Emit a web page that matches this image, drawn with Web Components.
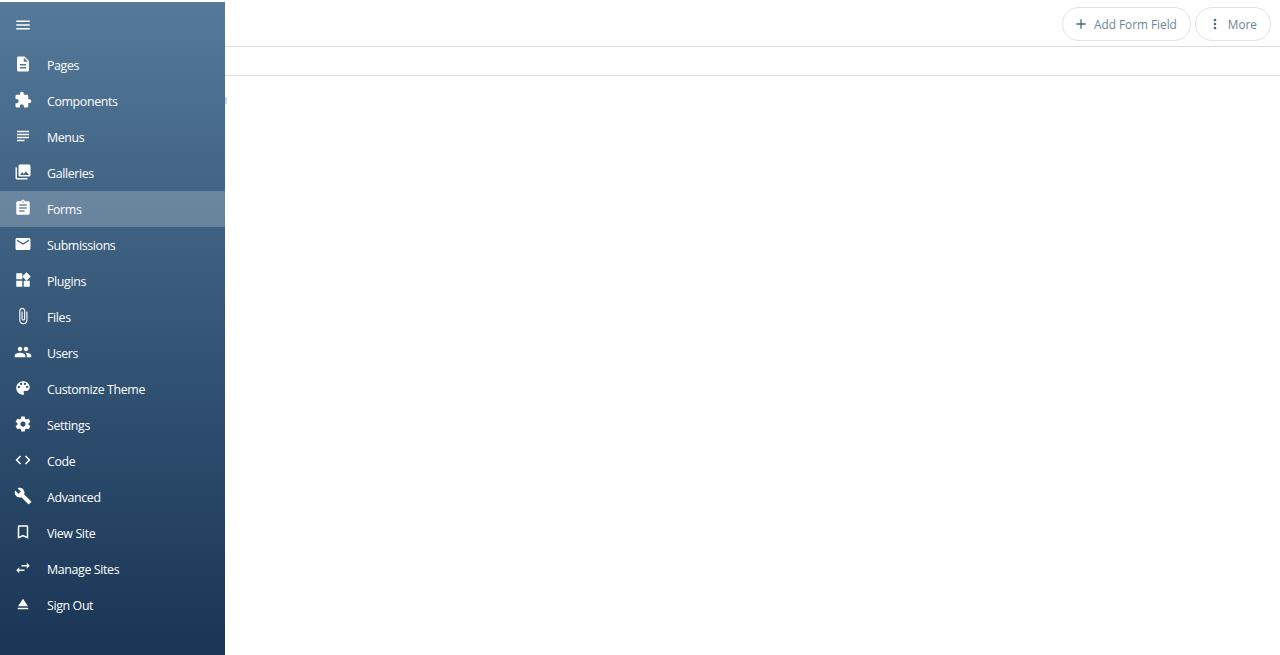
<!DOCTYPE html>
<html><head><meta charset="utf-8"><title>Forms</title>
<style>html,body{margin:0;height:100%;overflow:hidden;background:#fff;font-family:"Open Sans",sans-serif}</style>
</head><body>
<app-shell>
<side-nav slot="nav">
<nav-item icon="description">Pages</nav-item>
<nav-item icon="extension">Components</nav-item>
<nav-item icon="subject">Menus</nav-item>
<nav-item icon="collections">Galleries</nav-item>
<nav-item icon="assignment" active>Forms</nav-item>
<nav-item icon="email">Submissions</nav-item>
<nav-item icon="widgets">Plugins</nav-item>
<nav-item icon="attach">Files</nav-item>
<nav-item icon="people">Users</nav-item>
<nav-item icon="palette">Customize Theme</nav-item>
<nav-item icon="settings">Settings</nav-item>
<nav-item icon="code">Code</nav-item>
<nav-item icon="build">Advanced</nav-item>
<nav-item icon="bookmark">View Site</nav-item>
<nav-item icon="swap">Manage Sites</nav-item>
<nav-item icon="eject">Sign Out</nav-item>
</side-nav>
<top-bar slot="main">
<pill-button icon="add" style="padding-left:10px">Add Form Field</pill-button>
<pill-button icon="more">More</pill-button>
</top-bar>
</app-shell>
<script>
const P={
menu:"M3 18h18v-2H3v2zm0-5h18v-2H3v2zm0-7v2h18V6H3z",
description:"M14 2H6c-1.1 0-1.99.9-1.99 2L4 20c0 1.1.89 2 1.99 2H18c1.1 0 2-.9 2-2V8l-6-6zm2 16H8v-2h8v2zm0-4H8v-2h8v2zm-3-5V3.5L18.5 9H13z",
extension:"M20.5 11H19V7c0-1.1-.9-2-2-2h-4V3.5C13 2.12 11.88 1 10.5 1S8 2.12 8 3.5V5H4c-1.1 0-1.99.9-1.99 2v3.8H3.5c1.49 0 2.7 1.21 2.7 2.7s-1.21 2.7-2.7 2.7H2V20c0 1.1.9 2 2 2h3.8v-1.5c0-1.49 1.21-2.7 2.7-2.7 1.49 0 2.7 1.21 2.7 2.7V22H17c1.1 0 2-.9 2-2v-4h1.5c1.38 0 2.5-1.12 2.5-2.5S21.88 11 20.5 11z",
subject:"M14 17H4v2h10v-2zm6-8H4v2h16V9zM4 15h16v-2H4v2zM4 5v2h16V5H4z",
collections:"M22 16V4c0-1.1-.9-2-2-2H8c-1.1 0-2 .9-2 2v12c0 1.1.9 2 2 2h12c1.1 0 2-.9 2-2zm-11-4l2.03 2.71L16 11l4 5H8l3-4zM2 6v14c0 1.1.9 2 2 2h14v-2H4V6H2z",
assignment:"M19 3h-4.18C14.4 1.84 13.3 1 12 1c-1.3 0-2.4.84-2.82 2H5c-1.1 0-2 .9-2 2v14c0 1.1.9 2 2 2h14c1.1 0 2-.9 2-2V5c0-1.1-.9-2-2-2zm-7 0c.55 0 1 .45 1 1s-.45 1-1 1-1-.45-1-1 .45-1 1-1zm2 14H7v-2h7v2zm3-4H7v-2h10v2zm0-4H7V7h10v2z",
email:"M20 4H4c-1.1 0-1.99.9-1.99 2L2 18c0 1.1.9 2 2 2h16c1.1 0 2-.9 2-2V6c0-1.1-.9-2-2-2zm0 4l-8 5-8-5V6l8 5 8-5v2z",
widgets:"M13 13v8h8v-8h-8zM3 21h8v-8H3v8zM3 3v8h8V3H3zm13.66-1.31L11 7.34 16.66 13l5.66-5.66-5.66-5.65z",
attach:"M16.5 6v11.5c0 2.21-1.79 4-4 4s-4-1.79-4-4V5c0-1.38 1.12-2.5 2.5-2.5s2.5 1.12 2.5 2.5v10.5c0 .55-.45 1-1 1s-1-.45-1-1V6H10v9.5c0 1.38 1.12 2.5 2.5 2.5s2.5-1.12 2.5-2.5V5c0-2.21-1.79-4-4-4S7 2.79 7 5v12.5c0 3.04 2.46 5.5 5.5 5.5s5.5-2.46 5.5-5.5V6h-1.5z",
people:"M16 11c1.66 0 2.99-1.34 2.99-3S17.66 5 16 5c-1.66 0-3 1.34-3 3s1.34 3 3 3zm-8 0c1.66 0 2.99-1.34 2.99-3S9.66 5 8 5C6.34 5 5 6.34 5 8s1.34 3 3 3zm0 2c-2.33 0-7 1.17-7 3.5V19h14v-2.5c0-2.33-4.67-3.5-7-3.5zm8 0c-.29 0-.62.02-.97.05 1.16.84 1.97 1.97 1.97 3.45V19h6v-2.5c0-2.33-4.67-3.5-7-3.5z",
palette:"M12 3c-4.97 0-9 4.03-9 9s4.03 9 9 9c.83 0 1.5-.67 1.5-1.5 0-.39-.15-.74-.39-1.01-.23-.26-.38-.61-.38-.99 0-.83.67-1.5 1.5-1.5H16c2.76 0 5-2.24 5-5 0-4.42-4.03-8-9-8zm-5.5 9c-.83 0-1.5-.67-1.5-1.5S5.67 9 6.5 9 8 9.67 8 10.5 7.33 12 6.5 12zm3-4C8.67 8 8 7.33 8 6.5S8.67 5 9.5 5s1.5.67 1.5 1.5S10.33 8 9.5 8zm5 0c-.83 0-1.5-.67-1.5-1.5S13.67 5 14.5 5s1.5.67 1.5 1.5S15.33 8 14.5 8zm3 4c-.83 0-1.5-.67-1.5-1.5S16.67 9 17.5 9s1.5.67 1.5 1.5-.67 1.5-1.5 1.5z",
settings:"M19.43 12.98c.04-.32.07-.64.07-.98s-.03-.66-.07-.98l2.11-1.65c.19-.15.24-.42.12-.64l-2-3.46c-.12-.22-.39-.3-.61-.22l-2.49 1c-.52-.4-1.08-.73-1.69-.98l-.38-2.65C14.46 2.18 14.25 2 14 2h-4c-.25 0-.46.18-.49.42l-.38 2.65c-.61.25-1.17.59-1.69.98l-2.49-1c-.23-.09-.49 0-.61.22l-2 3.46c-.13.22-.07.49.12.64l2.11 1.65c-.04.32-.07.65-.07.98s.03.66.07.98l-2.11 1.65c-.19.15-.24.42-.12.64l2 3.46c.12.22.39.3.61.22l2.49-1c.52.4 1.08.73 1.69.98l.38 2.65c.03.24.24.42.49.42h4c.25 0 .46-.18.49-.42l.38-2.65c.61-.25 1.17-.59 1.69-.98l2.49 1c.23.09.49 0 .61-.22l2-3.46c.12-.22.07-.49-.12-.64l-2.11-1.65zM12 15.5c-1.93 0-3.5-1.57-3.5-3.5s1.57-3.5 3.5-3.5 3.5 1.57 3.5 3.5-1.57 3.5-3.5 3.5z",
code:"M9.4 16.6L4.8 12l4.6-4.6L8 6l-6 6 6 6 1.4-1.4zm5.2 0l4.6-4.6-4.6-4.6L16 6l6 6-6 6-1.4-1.4z",
build:"M22.7 19l-9.1-9.1c.9-2.3.4-5-1.5-6.9-2-2-5-2.4-7.4-1.3L9 6 6 9 1.6 4.7C.4 7.1.9 10.1 2.9 12.1c1.9 1.9 4.6 2.4 6.9 1.5l9.1 9.1c.4.4 1 .4 1.4 0l2.3-2.3c.5-.4.5-1.1.1-1.4z",
bookmark:"M17 3H7c-1.1 0-1.99.9-1.99 2L5 21l7-3 7 3V5c0-1.1-.9-2-2-2zm0 15l-5-2.18L7 18V5h10v13z",
swap:"M6.99 11L3 15l3.99 4v-3H14v-2H6.99v-3zM21 9l-3.99-4v3H10v2h7.01v3L21 9z",
eject:"M5 17h14v2H5zm7-12L5.33 15h13.34z",
add:"M19 13h-6v6h-2v-6H5v-2h6V5h2v6h6v2z",
more:"M12 8c1.1 0 2-.9 2-2s-.9-2-2-2-2 .9-2 2 .9 2 2 2zm0 2c-1.1 0-2 .9-2 2s.9 2 2 2 2-.9 2-2-.9-2-2-2zm0 6c-1.1 0-2 .9-2 2s.9 2 2 2 2-.9 2-2-.9-2-2-2z"
};
const svg=(n,s)=>`<svg width="${s}" height="${s}" viewBox="0 0 24 24" fill="currentColor" aria-hidden="true"><path d="${P[n]}"/></svg>`;
class Base extends HTMLElement{
  constructor(){super();this.attachShadow({mode:"open"});}
}
customElements.define("app-shell",class extends Base{connectedCallback(){this.shadowRoot.innerHTML=`<style>
:host{display:flex;height:100vh;align-items:stretch}
.nav{flex:0 0 225px;display:flex;margin-top:2px;position:relative;z-index:1}
.main{flex:1;min-width:0;display:flex;flex-direction:column}
.row{height:28px;border-bottom:1px solid #dcdcdc}
.nub{position:absolute;left:225px;top:95px;width:2px;height:7px;background:#b9c6d6;opacity:.7}
</style><div class="nav"><slot name="nav"></slot><span class="nub"></span></div>
<div class="main"><slot name="main"></slot><div class="row"></div></div>`;}});
customElements.define("side-nav",class extends Base{connectedCallback(){this.shadowRoot.innerHTML=`<style>
:host{display:flex;flex-direction:column;width:100%;background:linear-gradient(180deg,#547999 0%,#3b5d7e 40%,#1a3555 100%);color:#fff}
.head{height:45px;flex:none;display:flex;align-items:center;padding-left:14px;box-sizing:border-box}
svg{display:block}
</style><div class="head">${svg("menu",18)}</div><slot></slot>`;}});
customElements.define("nav-item",class extends Base{connectedCallback(){const on=this.hasAttribute("active");this.shadowRoot.innerHTML=`<style>
:host{display:flex;align-items:center;height:36px;flex:none;font:12.4px/18px "Open Sans",sans-serif;letter-spacing:-.37px;color:#fff;background:${on?"rgba(255,255,255,.22)":"transparent"}}
.i{width:18px;height:18px;margin:-2px 15px 0 14px;flex:none}
.t{margin-top:2px}
svg{display:block}
</style><span class="i">${svg(this.getAttribute("icon"),18)}</span><span class="t"><slot></slot></span>`;}});
customElements.define("top-bar",class extends Base{connectedCallback(){this.shadowRoot.innerHTML=`<style>
:host{display:flex;justify-content:flex-end;align-items:flex-start;gap:4px;height:46px;flex:none;padding:0 9px 0 0;border-bottom:1px solid #dcdcdc}
::slotted(*){margin-top:7px}
</style><slot></slot>`;}});
customElements.define("pill-button",class extends Base{connectedCallback(){this.shadowRoot.innerHTML=`<style>
:host{display:inline-flex;align-items:center;height:34px;box-sizing:border-box;border:1px solid #dfe3e6;border-radius:17px;padding:0 13px 0 11px;font:11.8px/18px "Open Sans",sans-serif;color:#718296;gap:5px}
svg{display:block;color:#4f667c}
</style>${svg(this.getAttribute("icon"),16)}<slot></slot>`;}});
</script>
</body></html>
